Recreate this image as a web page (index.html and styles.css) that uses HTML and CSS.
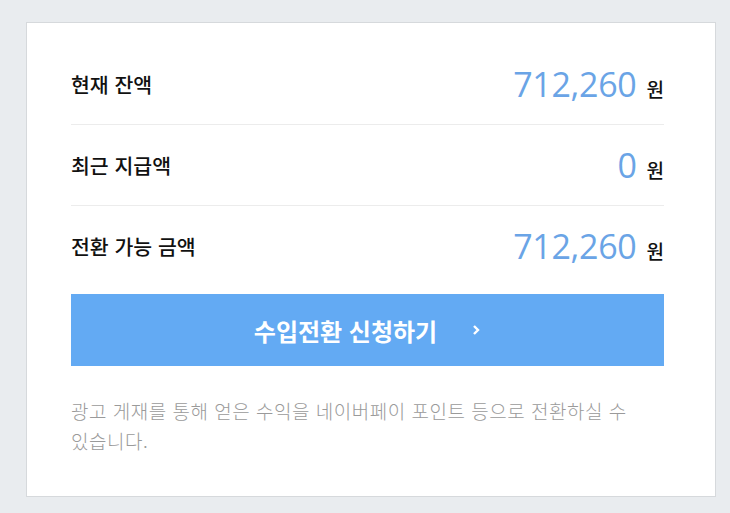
FILE: index.html
```html
<!DOCTYPE html>
<html lang="ko">

<head>
    <meta charset="UTF-8">
    <meta name="viewport" content="width=device-width, initial-scale=1.0">
    <title>수익 전환</title>
    <link rel="stylesheet" href="styles.css">
</head>

<body>
    <div class="card">
        <div class="row">
            <span class="label">현재 잔액</span>
            <span class="amount"><em>712,260</em> 원</span>
        </div>
        <div class="row">
            <span class="label">최근 지급액</span>
            <span class="amount"><em>0</em> 원</span>
        </div>
        <div class="row last">
            <span class="label">전환 가능 금액</span>
            <span class="amount"><em>712,260</em> 원</span>
        </div>
        <button class="apply">
            수입전환 신청하기
            <svg width="10" height="12" viewBox="0 0 10 12"><path d="M3 2 L7 6 L3 10" fill="none" stroke="#fff" stroke-width="2.4"/></svg>
        </button>
        <p class="notice">광고 게재를 통해 얻은 수익을 네이버페이 포인트 등으로 전환하실 수 있습니다.</p>
    </div>
</body>

</html>
```

FILE: styles.css
```css
body {
    margin: 0;
    background-color: #e9ecef;
    font-family: "Noto Sans CJK KR", "Noto Sans", sans-serif;
    padding: 22px 14px 17px 26px;
}

.card {
    background-color: white;
    border: 1px solid #d6d9dc;
    padding: 21px 51px 40px 44px;
}

.row {
    display: flex;
    justify-content: space-between;
    align-items: center;
    height: 80px;
    border-bottom: 1px solid #ececec;
}

.row.last {
    border-bottom: none;
    margin-bottom: 8px;
}

.label {
    font-size: 20.5px;
    font-weight: 500;
    color: #111;
}

.amount {
    font-size: 19px;
    font-weight: 500;
    color: #111;
    display: flex;
    align-items: baseline;
    gap: 10px;
}

.amount em {
    font-style: normal;
    font-family: "Open Sans", sans-serif;
    font-weight: 400;
    font-size: 34px;
    color: #6aa4e6;
    letter-spacing: -0.3px;
}

.apply {
    display: flex;
    align-items: center;
    justify-content: center;
    gap: 34px;
    width: 100%;
    height: 72px;
    border: none;
    background-color: #63aaf3;
    color: white;
    font-family: "Noto Sans CJK KR", sans-serif;
    font-size: 24px;
    font-weight: 700;
}

.notice {
    margin: 30px 0 0;
    font-size: 19px;
    font-weight: 300;
    letter-spacing: 0.5px;
    line-height: 30px;
    color: #9a9a9a;
    word-break: keep-all;
}
```
